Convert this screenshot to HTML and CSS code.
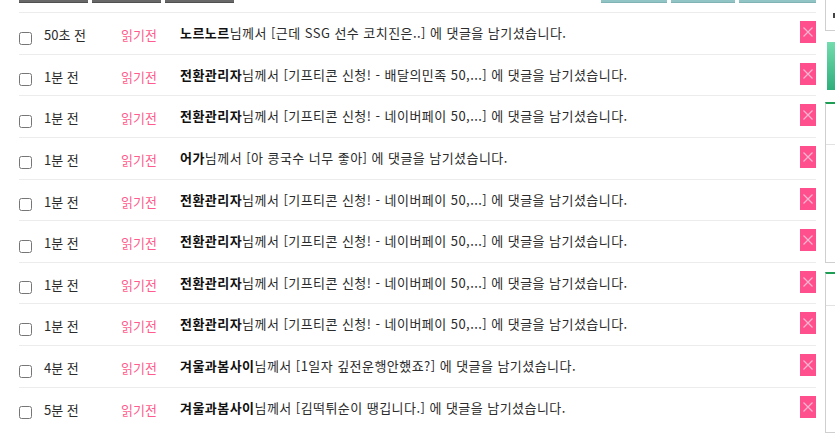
FILE: index.html
```html
<!DOCTYPE html>
<html lang="ko">
<head>
<meta charset="utf-8">
<link rel="stylesheet" href="styles.css">
</head>
<body>
<div class="page">
  <div class="main">
    <div class="topbar">
      <div class="btn-group">
        <span class="btn dark w69"></span>
        <span class="btn dark w69"></span>
        <span class="btn dark w69"></span>
      </div>
      <div class="btn-group">
        <span class="btn teal w66"></span>
        <span class="btn teal w64"></span>
        <span class="btn teal w77"></span>
      </div>
    </div>
    <ul class="list">
      <li class="row"><input type="checkbox" class="chk"><span class="time">50초 전</span><span class="status">읽기전</span><span class="msg"><b>노르노르</b>님께서 [근데 SSG 선수 코치진은..] 에 댓글을 남기셨습니다.</span><button class="del"><svg viewBox="0 0 16 22" width="16" height="22"><path d="M3.5 6.5 L12.5 15.5 M12.5 6.5 L3.5 15.5" stroke="#ffb6d0" stroke-width="1.2" fill="none"/></svg></button></li>
      <li class="row"><input type="checkbox" class="chk"><span class="time">1분 전</span><span class="status">읽기전</span><span class="msg"><b>전환관리자</b>님께서 [기프티콘 신청! - 배달의민족 50,...] 에 댓글을 남기셨습니다.</span><button class="del"><svg viewBox="0 0 16 22" width="16" height="22"><path d="M3.5 6.5 L12.5 15.5 M12.5 6.5 L3.5 15.5" stroke="#ffb6d0" stroke-width="1.2" fill="none"/></svg></button></li>
      <li class="row"><input type="checkbox" class="chk"><span class="time">1분 전</span><span class="status">읽기전</span><span class="msg"><b>전환관리자</b>님께서 [기프티콘 신청! - 네이버페이 50,...] 에 댓글을 남기셨습니다.</span><button class="del"><svg viewBox="0 0 16 22" width="16" height="22"><path d="M3.5 6.5 L12.5 15.5 M12.5 6.5 L3.5 15.5" stroke="#ffb6d0" stroke-width="1.2" fill="none"/></svg></button></li>
      <li class="row"><input type="checkbox" class="chk"><span class="time">1분 전</span><span class="status">읽기전</span><span class="msg"><b>어가</b>님께서 [아 콩국수 너무 좋아] 에 댓글을 남기셨습니다.</span><button class="del"><svg viewBox="0 0 16 22" width="16" height="22"><path d="M3.5 6.5 L12.5 15.5 M12.5 6.5 L3.5 15.5" stroke="#ffb6d0" stroke-width="1.2" fill="none"/></svg></button></li>
      <li class="row"><input type="checkbox" class="chk"><span class="time">1분 전</span><span class="status">읽기전</span><span class="msg"><b>전환관리자</b>님께서 [기프티콘 신청! - 네이버페이 50,...] 에 댓글을 남기셨습니다.</span><button class="del"><svg viewBox="0 0 16 22" width="16" height="22"><path d="M3.5 6.5 L12.5 15.5 M12.5 6.5 L3.5 15.5" stroke="#ffb6d0" stroke-width="1.2" fill="none"/></svg></button></li>
      <li class="row"><input type="checkbox" class="chk"><span class="time">1분 전</span><span class="status">읽기전</span><span class="msg"><b>전환관리자</b>님께서 [기프티콘 신청! - 네이버페이 50,...] 에 댓글을 남기셨습니다.</span><button class="del"><svg viewBox="0 0 16 22" width="16" height="22"><path d="M3.5 6.5 L12.5 15.5 M12.5 6.5 L3.5 15.5" stroke="#ffb6d0" stroke-width="1.2" fill="none"/></svg></button></li>
      <li class="row"><input type="checkbox" class="chk"><span class="time">1분 전</span><span class="status">읽기전</span><span class="msg"><b>전환관리자</b>님께서 [기프티콘 신청! - 네이버페이 50,...] 에 댓글을 남기셨습니다.</span><button class="del"><svg viewBox="0 0 16 22" width="16" height="22"><path d="M3.5 6.5 L12.5 15.5 M12.5 6.5 L3.5 15.5" stroke="#ffb6d0" stroke-width="1.2" fill="none"/></svg></button></li>
      <li class="row"><input type="checkbox" class="chk"><span class="time">1분 전</span><span class="status">읽기전</span><span class="msg"><b>전환관리자</b>님께서 [기프티콘 신청! - 네이버페이 50,...] 에 댓글을 남기셨습니다.</span><button class="del"><svg viewBox="0 0 16 22" width="16" height="22"><path d="M3.5 6.5 L12.5 15.5 M12.5 6.5 L3.5 15.5" stroke="#ffb6d0" stroke-width="1.2" fill="none"/></svg></button></li>
      <li class="row"><input type="checkbox" class="chk"><span class="time">4분 전</span><span class="status">읽기전</span><span class="msg"><b>겨울과봄사이</b>님께서 [1일자 깊전운행안했죠?] 에 댓글을 남기셨습니다.</span><button class="del"><svg viewBox="0 0 16 22" width="16" height="22"><path d="M3.5 6.5 L12.5 15.5 M12.5 6.5 L3.5 15.5" stroke="#ffb6d0" stroke-width="1.2" fill="none"/></svg></button></li>
      <li class="row"><input type="checkbox" class="chk"><span class="time">5분 전</span><span class="status">읽기전</span><span class="msg"><b>겨울과봄사이</b>님께서 [김떡튀순이 땡깁니다.] 에 댓글을 남기셨습니다.</span><button class="del"><svg viewBox="0 0 16 22" width="16" height="22"><path d="M3.5 6.5 L12.5 15.5 M12.5 6.5 L3.5 15.5" stroke="#ffb6d0" stroke-width="1.2" fill="none"/></svg></button></li>
    </ul>
  </div>
  <aside class="side">
    <div class="side-top"><span class="side-mark"></span></div>
    <div class="side-green"></div>
    <div class="side-box tall"><div class="side-head"></div></div>
    <div class="side-box"><div class="side-head short"></div></div>
  </aside>
</div>
</body>
</html>
```

FILE: styles.css
```css
html, body {
  margin: 0;
  padding: 0;
  background: #fff;
  overflow: hidden;
}
body {
  font-family: "Noto Sans CJK KR", "Noto Sans", sans-serif;
  font-size: 13px;
  color: #333;
}
.page {
  display: flex;
  width: 835px;
  height: 433px;
  overflow: hidden;
}
.main {
  width: 797px;
  margin-left: 19px;
  flex: none;
}
.topbar {
  height: 12px;
  display: flex;
  justify-content: space-between;
}
.btn-group {
  display: flex;
  gap: 4px;
}
.btn {
  display: block;
  height: 2px;
}
.btn.dark {
  background: #686868;
  border-bottom: 1px solid #505050;
}
.btn.teal {
  background: #91c4c5;
  border-bottom: 1px solid #7fb3b4;
}
.w69 { width: 69px; }
.w66 { width: 66px; }
.w64 { width: 64px; }
.w77 { width: 77px; }
.list {
  list-style: none;
  margin: 0;
  padding: 0;
}
.row {
  display: flex;
  align-items: flex-start;
  height: 40.63px;
  border-top: 1px solid #ececec;
  line-height: 20px;
}
.chk {
  width: 13px;
  height: 13px;
  margin: 18.5px 0 0 0;
  flex: none;
}
.time {
  width: 77px;
  margin-left: 12px;
  padding-top: 12px;
  color: #2b2b2b;
  flex: none;
}
.status {
  width: 59px;
  padding-top: 12px;
  color: #ff5b8c;
  flex: none;
}
.msg {
  flex: 1;
  padding-top: 10px;
  color: #2b2b2b;
  white-space: nowrap;
  letter-spacing: 0.45px;
}
.msg b {
  color: #111;
  font-weight: 700;
}
.del {
  flex: none;
  width: 16px;
  height: 22px;
  margin-top: 8px;
  padding: 0;
  border: 0;
  background: #ff4f8c;
  display: block;
}
.del svg {
  display: block;
}
.side {
  flex: none;
  width: 10px;
  margin-left: 9px;
  display: flex;
  flex-direction: column;
}
.side-top {
  height: 36px;
  border-left: 1px solid #cfcfcf;
  border-bottom: 1px solid #cfcfcf;
  padding: 13px 0 0 7px;
  box-sizing: border-box;
}
.side-mark {
  display: block;
  width: 3px;
  height: 5px;
  background: #444;
}
.side-green {
  margin: 11px 0 0 2px;
  height: 60px;
  background: linear-gradient(#74dcae, #2eae7b);
}
.side-box {
  margin-top: 12px;
  border-top: 2px solid #1e9e55;
  border-left: 1px solid #cfcfcf;
  border-bottom: 1px solid #cfcfcf;
  height: 200px;
}
.side-box.tall {
  height: 199px;
}
.side-head {
  height: 40px;
  border-bottom: 1px solid #e2e2e2;
}
.side-head.short {
  height: 31px;
}
.side-box + .side-box {
  margin-top: 9px;
}
```
